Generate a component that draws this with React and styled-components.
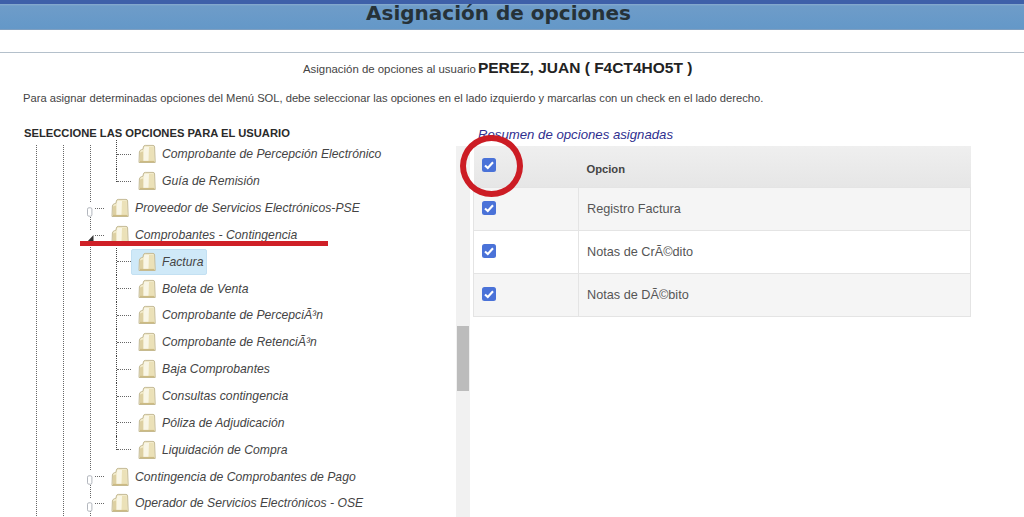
import React from "react";
import styled, { createGlobalStyle } from "styled-components";

const Global = createGlobalStyle`
  html, body { margin: 0; padding: 0; background: #fff; overflow: hidden; }
  body { font-family: "Liberation Sans", Arial, sans-serif; color: #333; }
`;
const Page = styled.div`
  position: relative; width: 1024px; height: 517px; overflow: hidden; background: #fff;
`;
const TopBand = styled.header`
  height: 30px; box-sizing: border-box;
  border-top: 4px solid #3e60a9;
  background: linear-gradient(180deg, #8aaccf 0, #6e9cc9 2px, #6498c8 100%);
  border-bottom: 1px solid #7f9fc0;
  display: flex; justify-content: center;
`;
const Title = styled.h1`
  margin: -1px 0 0 -27px; font: bold 20px/20px "DejaVu Sans", sans-serif; color: #263238;
`;
const Rule = styled.hr`
  margin: 22px 0 0; border: 0; border-top: 1px solid #b4c0cb; height: 0;
`;
const UserLine = styled.p`
  margin: 6px 0 0; padding-left: 303px; height: 18px; display: flex; align-items: baseline; gap: 2px;
  font-size: 11.4px; line-height: 18px; color: #444;
`;
const UserName = styled.strong`
  font-size: 15.5px; color: #222;
`;
const Help = styled.p`
  margin: 14px 0 0 23px; font-size: 11.18px; line-height: 14px; color: #444;
`;
const Columns = styled.div`
  display: flex; margin-top: 21px; padding-left: 24px;
`;
const LeftCol = styled.section`
  width: 446px; flex: none;
`;
const TreeHeading = styled.h2`
  margin: 0; font-size: 11.2px; line-height: 14px; font-weight: bold; color: #2a2a2a;
`;
const TreeWrap = styled.div`
  display: flex; height: 400px;
`;
const Tree = styled.ul`
  list-style: none; margin: 0; padding: 1px 0 0; width: 432px; flex: none; height: 400px; overflow: hidden;
  background-image:
    repeating-linear-gradient(180deg, #666 0 1px, transparent 1px 2px),
    repeating-linear-gradient(180deg, #666 0 1px, transparent 1px 2px),
    repeating-linear-gradient(180deg, #666 0 1px, transparent 1px 2px);
  background-size: 1px 100%;
  background-position: 12px 5px, 39px 5px, 66px 5px;
  background-repeat: no-repeat;
`;
const Row = styled.li`
  position: relative; height: 26.85px; display: flex; align-items: center; box-sizing: border-box;
  padding-left: ${p => (p.$level === 2 ? 107 : 80)}px;
  &::before {
    content: ""; position: absolute; top: 13px; height: 0; border-top: 1px dotted #666;
    left: ${p => (p.$level === 2 ? 93 : 67)}px; width: ${p => (p.$level === 2 ? 14 : 13)}px;
  }
  &::after {
    content: ${p => (p.$level === 2 ? '""' : "none")}; position: absolute; left: 92px; width: 0;
    top: ${p => (p.$first ? -1 : 0)}px; height: ${p => (p.$last ? 14 : 27)}px; border-left: 1px dotted #444;
  }
`;
const Expander = styled.span`
  position: absolute; left: 62px; top: 8px; z-index: 1; background: #fff;
  width: 8px; height: 10px; display: block;
`;
const Node = styled.span`
  display: inline-flex; align-items: center; gap: 6px; height: 26px; box-sizing: border-box;
  padding: 0 3px 0 6px; border-radius: 2px; border: 1px solid ${p => (p.$selected ? "#c3e0f2" : "transparent")};
  background: ${p => (p.$selected ? "#cfe9f8" : "transparent")};
  position: relative; z-index: 1;
`;
const Label = styled.span`
  font-size: 12.17px; font-style: italic; color: #444; white-space: nowrap; line-height: 16px; letter-spacing: .03px;
`;
const ScrollTrack = styled.div`
  width: 14px; flex: none; background: #f1f1f1; display: flex; flex-direction: column;
  padding: 180px 0 0 1px; box-sizing: border-box; margin-top: 6px;
`;
const ScrollThumb = styled.div`
  height: 65px; width: 12px; background: #bcbcbc;
`;
const RightCol = styled.section`
  width: 498px; margin-left: 3px; flex: none;
`;
const SummaryTitle = styled.h3`
  margin: 2px 0 0 5px; font-size: 13.2px; line-height: 14px; font-weight: normal; font-style: italic; color: #2f2f8f;
`;
const Table = styled.table`
  margin-top: 4px; width: 498px; border-collapse: collapse; table-layout: fixed; font-size: 12.7px; color: #555;
`;
const HeadRow = styled.tr`
  height: 41px; background: linear-gradient(180deg, #efefef, #e6e6e6);
`;
const BodyRow = styled.tr`
  height: 43px; background: ${p => (p.$alt ? "#f5f5f5" : "#fff")};
`;
const CheckCell = styled.td`
  width: 105px; box-sizing: border-box; padding: 0 0 1px 8px; border: 1px solid #e4e4e4; vertical-align: middle;
`;
const TextCell = styled.td`
  padding: 1px 0 0 8px; border: 1px solid #e4e4e4; vertical-align: middle;
`;
const HeadCheck = styled.th`
  width: 105px; box-sizing: border-box; padding: 0 0 2px 8px; text-align: left; vertical-align: middle;
`;
const HeadText = styled.th`
  padding: 6px 0 0 8px; text-align: left; font-size: 11.2px; color: #444; vertical-align: middle;
`;
const Box = styled.span`
  display: block; width: 14px; height: 14px; border-radius: 2.5px; background: #4a72d8;
  svg { display: block; }
`;
const RedCircle = styled.div`
  position: absolute; left: 460px; top: 135px; width: 63px; height: 62px; box-sizing: border-box;
  border: 6px solid #cc1c24; border-radius: 50%;
`;
const RedLine = styled.div`
  position: absolute; left: 80px; top: 241px; width: 248px; height: 5px; background: #cf2027; z-index: 2;
`;

const Folder = () => (
  <svg width="18" height="20" viewBox="0 0 18 20">
    <path d="M1 18.5L1.4 8Q1.6 6.2 3.6 5.6L5 5.2L5.4 3Q5.7 1.4 7.2 1.4H15Q16.5 1.4 16.6 3L17.2 18.5Z" fill="#f2ebcb" stroke="#c4ba95" strokeWidth="1" />
    <path d="M2 18V8.6L5 7.4L5.5 18Z" fill="#ddd0a2" />
    <path d="M5.5 18L6.2 3H11L10.6 18Z" fill="#f9f6e6" />
    <path d="M10.6 18L11 3H15.6L16.3 18Z" fill="#ebe1b8" />
    <path d="M2 17.6H16.4" stroke="#cdbb83" strokeWidth="1.4" />
  </svg>
);
const Closed = () => (
  <svg width="8" height="10" viewBox="0 0 8 10"><rect x="1.5" y=".8" width="4.4" height="8.4" rx="1.4" fill="#fff" stroke="#a9aeb6" strokeWidth=".9" /></svg>
);
const Open = () => (
  <svg width="8" height="10" viewBox="0 0 8 10"><path d="M7.5 1V9H0Z" fill="#333" /></svg>
);
const Check = () => (
  <Box>
    <svg width="14" height="14" viewBox="0 0 14 14"><path d="M3 7.4L5.8 10L11 4.2" fill="none" stroke="#fff" strokeWidth="2.1" /></svg>
  </Box>
);

const rows = [
  { t: "Comprobante de Percepción Electrónico", l: 2, first: true },
  { t: "Guía de Remisión", l: 2, last: true },
  { t: "Proveedor de Servicios Electrónicos-PSE", l: 1, exp: "closed" },
  { t: "Comprobantes - Contingencia", l: 1, exp: "open" },
  { t: "Factura", l: 2, selected: true },
  { t: "Boleta de Venta", l: 2 },
  { t: "Comprobante de PercepciÃ³n", l: 2 },
  { t: "Comprobante de RetenciÃ³n", l: 2 },
  { t: "Baja Comprobantes", l: 2 },
  { t: "Consultas contingencia", l: 2 },
  { t: "Póliza de Adjudicación", l: 2 },
  { t: "Liquidación de Compra", l: 2, last: true },
  { t: "Contingencia de Comprobantes de Pago", l: 1, exp: "closed" },
  { t: "Operador de Servicios Electrónicos - OSE", l: 1, exp: "closed" },
];
const options = ["Registro Factura", "Notas de CrÃ©dito", "Notas de DÃ©bito"];

export default function App() {
  return (
    <Page>
      <Global />
      <TopBand><Title>Asignación de opciones</Title></TopBand>
      <Rule />
      <UserLine>Asignación de opciones al usuario <UserName>PEREZ, JUAN ( F4CT4HO5T )</UserName></UserLine>
      <Help>Para asignar determinadas opciones del Menú SOL, debe seleccionar las opciones en el lado izquierdo y marcarlas con un check en el lado derecho.</Help>
      <Columns>
        <LeftCol>
          <TreeHeading>SELECCIONE LAS OPCIONES PARA EL USUARIO</TreeHeading>
          <TreeWrap>
            <Tree>
              {rows.map(r => (
                <Row key={r.t} $level={r.l} $first={r.first} $last={r.last}>
                  {r.exp && <Expander>{r.exp === "open" ? <Open /> : <Closed />}</Expander>}
                  <Node $selected={r.selected}><Folder /><Label>{r.t}</Label></Node>
                </Row>
              ))}
            </Tree>
            <ScrollTrack><ScrollThumb /></ScrollTrack>
          </TreeWrap>
        </LeftCol>
        <RightCol>
          <SummaryTitle>Resumen de opciones asignadas</SummaryTitle>
          <Table>
            <thead>
              <HeadRow><HeadCheck><Check /></HeadCheck><HeadText>Opcion</HeadText></HeadRow>
            </thead>
            <tbody>
              {options.map((o, i) => (
                <BodyRow key={o} $alt={i % 2 === 0}><CheckCell><Check /></CheckCell><TextCell>{o}</TextCell></BodyRow>
              ))}
            </tbody>
          </Table>
        </RightCol>
      </Columns>
      <RedCircle />
      <RedLine />
    </Page>
  );
}
